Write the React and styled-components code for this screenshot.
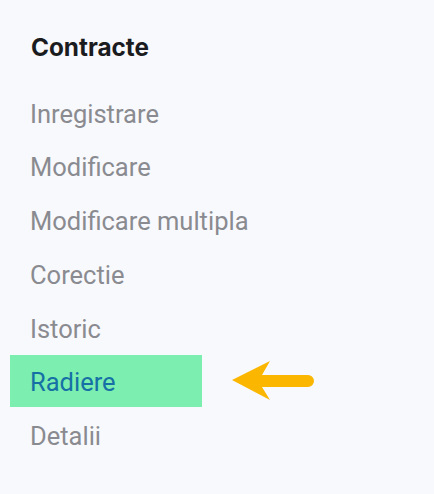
import React from "react";
import styled, { createGlobalStyle } from "styled-components";

const Global = createGlobalStyle`
  html, body { margin: 0; padding: 0; background: #f8f9fd; }
  body { font-family: Roboto, "Noto Sans", sans-serif; }
`;

const Sidebar = styled.nav`
  width: 434px;
  height: 494px;
  box-sizing: border-box;
  padding: 32px 0 0 10px;
  background: #f8f9fd;
`;

const Heading = styled.h2`
  margin: 0 0 0 21px;
  font-family: Inter, Roboto, sans-serif;
  font-weight: 700;
  font-size: 24.3px;
  line-height: 30px;
  color: #1b1c20;
`;

const List = styled.ul`
  list-style: none;
  margin: 24px 0 0 0;
  padding: 0;
  display: flex;
  flex-direction: column;
  gap: 1.8px;
`;

const Row = styled.li`
  position: relative;
  display: flex;
  align-items: center;
`;

const Item = styled.a`
  display: flex;
  align-items: center;
  box-sizing: border-box;
  width: 192px;
  height: 52px;
  padding-left: 20px;
  padding-top: 3px;
  font-size: 25.5px;
  color: ${(p) => (p.$active ? "#1670a5" : "#8a8b90")};
  background: ${(p) => (p.$active ? "#7beeb0" : "transparent")};
  text-decoration: none;
  white-space: nowrap;
`;

const Arrow = styled.svg`
  position: absolute;
  left: 212px;
  top: 6px;
`;

const items = [
  "Inregistrare",
  "Modificare",
  "Modificare multipla",
  "Corectie",
  "Istoric",
  "Radiere",
  "Detalii",
];

export default function App() {
  return (
    <>
      <Global />
      <Sidebar>
        <Heading>Contracte</Heading>
        <List>
          {items.map((t) => (
            <Row key={t}>
              <Item $active={t === "Radiere"}>{t}</Item>
              {t === "Radiere" && (
                <Arrow width="96" height="44" viewBox="0 0 96 44">
                  <path d="M10 19 L48 0 L40 14 L86 14 A6 6 0 0 1 86 26 L40 26 L48 39 Z" fill="#fbb700" />
                </Arrow>
              )}
            </Row>
          ))}
        </List>
      </Sidebar>
    </>
  );
}
